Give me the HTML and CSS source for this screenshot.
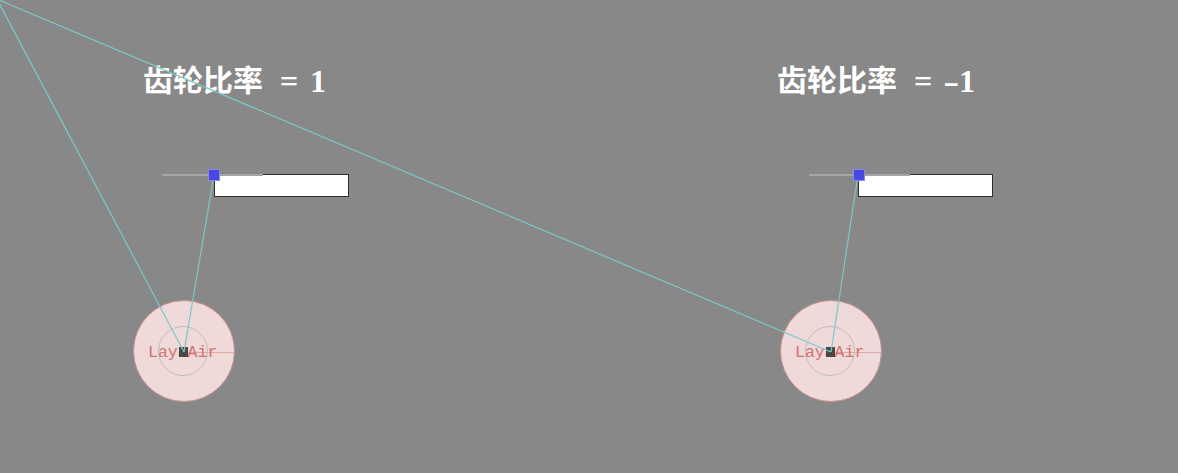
FILE: index.html
```html
<!DOCTYPE html>
<html>
<head>
<meta charset="utf-8">
<title>齿轮比率</title>
<link rel="stylesheet" href="styles.css">
</head>
<body>
<div class="stage">

<div class="title t1">齿轮比率<span class="c"> </span><span class="c">=</span><span class="c"> </span><span class="c">1</span></div>
<div class="title t2">齿轮比率<span class="c"> </span><span class="c">=</span><span class="c"> </span><span class="c"><span class="minus">-</span></span><span class="c">1</span></div>

<div class="slider s1">
  <div class="track"></div>
  <div class="thumb"></div>
  <div class="box"></div>
</div>
<div class="slider s2">
  <div class="track"></div>
  <div class="thumb"></div>
  <div class="box"></div>
</div>

<div class="gear g1">
  <div class="ring"></div>
  <div class="spoke"></div>
  <span class="label">LayaAir</span>
  <div class="hub"></div>
</div>
<div class="gear g2">
  <div class="ring"></div>
  <div class="spoke"></div>
  <span class="label">LayaAir</span>
  <div class="hub"></div>
</div>

<!-- joint lines -->
<svg class="joints" width="1178" height="473" viewBox="0 0 1178 473">
  <line x1="-1" y1="3" x2="184" y2="352"/>
  <line x1="-1" y1="0" x2="831" y2="352"/>
  <line x1="214" y1="175" x2="184" y2="352"/>
  <line x1="858" y1="175" x2="831" y2="352"/>
</svg>

</div>
</body>
</html>
```

FILE: styles.css
```css
body {
   margin: 0;
   background-color: #888888;
   font-family: "Liberation Serif", "Noto Sans CJK SC", serif;
}

.stage {
   position: relative;
   width: 1178px;
   height: 473px;
   overflow: hidden;
   background-color: #888888;
}

.title {
   position: absolute;
   top: 61px;
   color: #ffffff;
   font-size: 30px;
   font-weight: bold;
   line-height: 40px;
   white-space: pre;
}

/* half-width cells for the ascii part */
.title .c {
   display: inline-block;
   width: 15px;
   text-align: center;
   font-size: 32px;
   line-height: 40px;
   vertical-align: top;
}

.title .c:first-child {
   margin-left: 2px;
}

.title .minus {
   display: inline-block;
   transform: scaleX(1.5);
}

.t1 { left: 143px; }
.t2 { left: 777px; }

/* slider: track + thumb + white value box */
.slider {
   position: absolute;
   top: 168px;
   width: 190px;
   height: 30px;
}

.s1 { left: 160px; }
.s2 { left: 807px; }

.slider .track {
   position: absolute;
   left: 2px;
   top: 6px;
   width: 101px;
   height: 2px;
   background-color: #a6a6a6;
   z-index: 1;
}

.slider .box {
   position: absolute;
   left: 54px;
   top: 6px;
   width: 133px;
   height: 21px;
   background-color: #ffffff;
   border: 1px solid #2e2e2e;
}

.s2 .box { left: 51px; }

.slider .thumb {
   position: absolute;
   left: 48px;
   top: 1px;
   width: 10px;
   height: 10px;
   background-color: #4848e6;
   border: 1px solid #8a8ae0;
   z-index: 2;
}

.s2 .thumb { left: 46px; }

/* gear */
.gear {
   position: absolute;
   top: 300px;
   width: 102px;
   height: 102px;
}

.g1 { left: 133px; }
.g2 { left: 780px; }

.gear::before {
   content: "";
   position: absolute;
   inset: 0;
   border-radius: 50%;
   background-color: #f0d9d9;
   border: 1px solid #c48e8e;
   box-sizing: border-box;
}

.gear .ring {
   position: absolute;
   left: 25px;
   top: 26px;
   width: 50px;
   height: 50px;
   border-radius: 50%;
   border: 1px solid #bdbdbd;
   box-sizing: border-box;
}

.gear .spoke {
   position: absolute;
   left: 51px;
   top: 52px;
   width: 50px;
   height: 1px;
   background-color: #e0a8a8;
}

.gear .label {
   position: absolute;
   left: 15px;
   top: 43px;
   font-family: "Liberation Mono", "DejaVu Sans Mono", monospace;
   font-size: 16.5px;
   line-height: 20px;
   color: #d07272;
}

.gear .hub {
   position: absolute;
   left: 46px;
   top: 47px;
   width: 9px;
   height: 10px;
   background-color: #484848;
}

.joints {
   position: absolute;
   left: 0;
   top: 0;
}

.joints line {
   stroke: #7cc8c8;
   stroke-width: 1.2;
}
```
